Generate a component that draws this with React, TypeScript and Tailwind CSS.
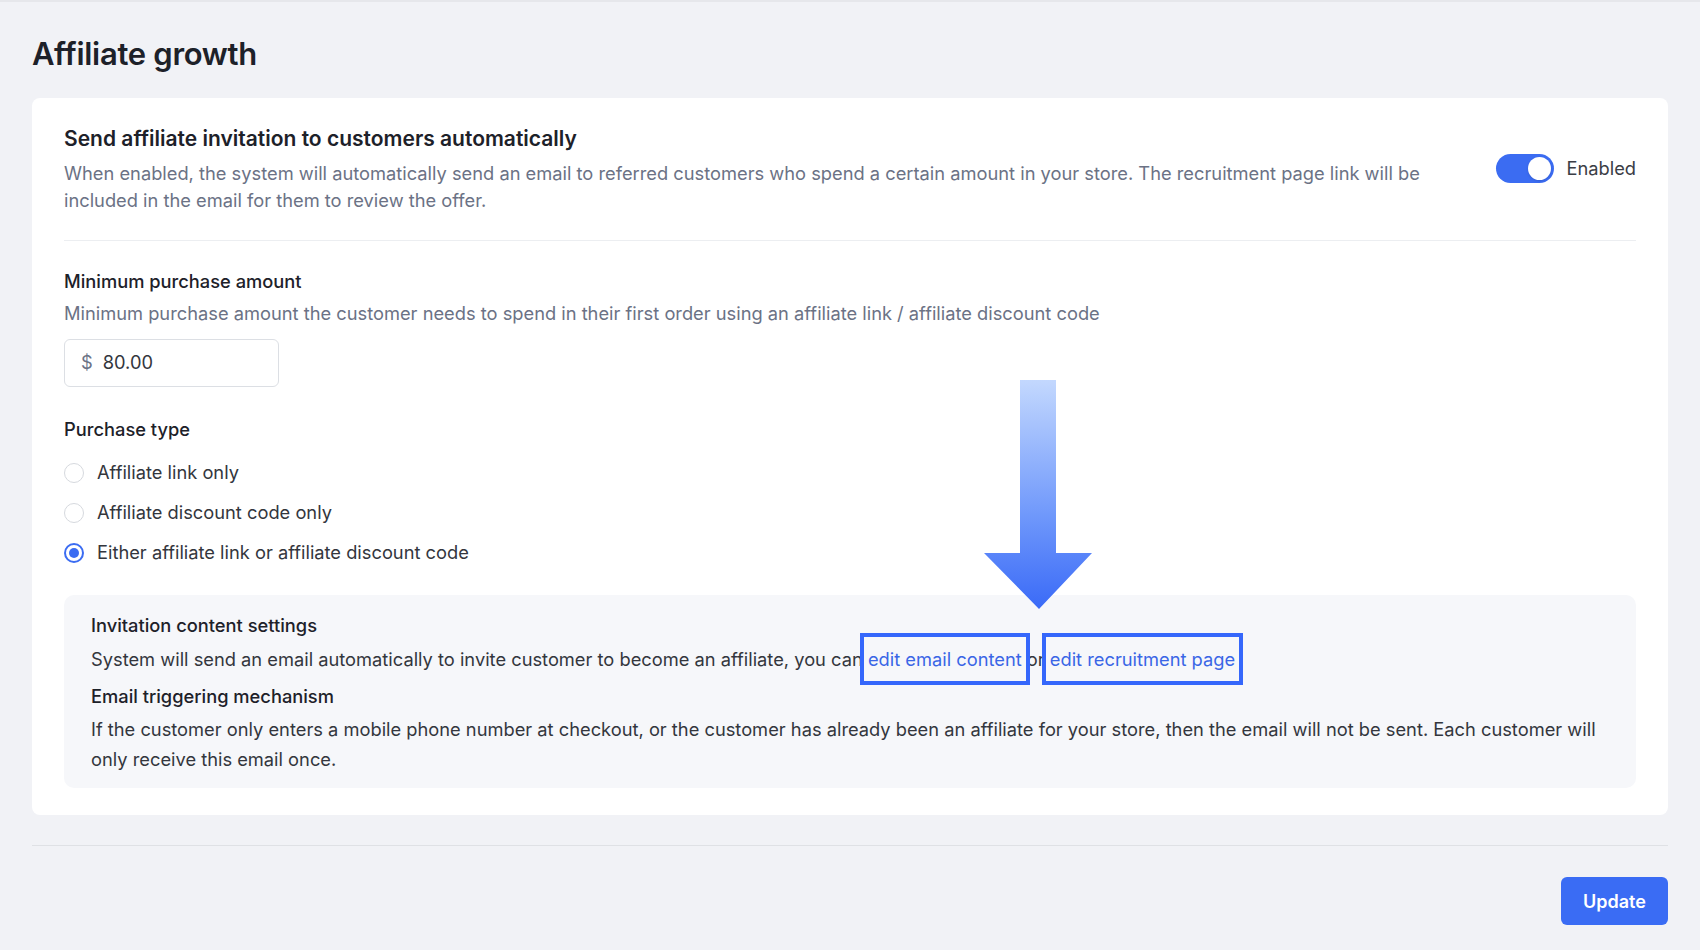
import { useState } from "react";

const purchaseTypes = [
    "Affiliate link only",
    "Affiliate discount code only",
    "Either affiliate link or affiliate discount code",
];

function DownArrow() {
    return (
        <svg width="110" height="230" viewBox="0 0 110 230">
            <defs>
                <linearGradient id="arrowFill" x1="0" y1="0" x2="0" y2="1">
                    <stop offset="0%" stopColor="#c3d8fe" />
                    <stop offset="60%" stopColor="#6e97fb" />
                    <stop offset="100%" stopColor="#3a6af7" />
                </linearGradient>
            </defs>
            <path
                d="M37 0 H73 V173 H109 L56 229 L1 173 H37 Z"
                fill="url(#arrowFill)"
            />
        </svg>
    );
}

function Toggle({ on, onClick }: { on: boolean; onClick: () => void }) {
    return (
        <button
            type="button"
            onClick={onClick}
            className={
                "relative h-[29px] w-[58px] rounded-full transition-colors " +
                (on ? "bg-[#3b6cf2]" : "bg-[#d1d5db]")
            }
        >
            <span
                className={
                    "absolute top-[3px] h-[23px] w-[23px] rounded-full bg-white shadow-sm transition-all " +
                    (on ? "left-[32px]" : "left-[3px]")
                }
            />
        </button>
    );
}

function BoxedLink({ children }: { children: string }) {
    return (
        <span className="relative text-[#3a66e6]">
            {children}
            <span className="pointer-events-none absolute -inset-x-[8px] -inset-y-[15px] border-[4px] border-[#3567fb]" />
        </span>
    );
}

export default function App() {
    const [enabled, setEnabled] = useState(true);
    const [purchaseType, setPurchaseType] = useState(2);
    const [amount, setAmount] = useState("80.00");

    return (
        <div
            className="min-h-[950px] border-t-2 border-[#e6e7eb] bg-[#f1f2f6] px-8 pt-[34px] pb-6 text-[18.3px] text-[#33363d]"
            style={{ fontFamily: "Inter, 'Noto Sans', sans-serif" }}
        >
            <h1 className="text-[31px] leading-[36px] font-semibold tracking-[-0.3px] text-[#1d2129]">
                Affiliate growth
            </h1>

            <div className="relative mt-[26px] rounded-[8px] bg-white px-8 pt-[27px] pb-[27px]">
                {/* auto invitation */}
                <div className="flex items-start justify-between gap-10">
                    <div className="max-w-[1390px] flex-1">
                        <h2 className="text-[21px] leading-[28px] font-semibold text-[#1d2129]">
                            Send affiliate invitation to customers automatically
                        </h2>
                        <p className="mt-[7px] leading-[27px] text-[#6b7285]">
                            When enabled, the system will automatically send an email to
                            referred customers who spend a certain amount in your store. The
                            recruitment page link will be included in the email for them to
                            review the offer.
                        </p>
                    </div>
                    <div className="mt-[29px] flex items-center gap-3">
                        <Toggle on={enabled} onClick={() => setEnabled(!enabled)} />
                        <span className="text-[#3a3d45]">
                            {enabled ? "Enabled" : "Disabled"}
                        </span>
                    </div>
                </div>

                <div className="mt-[26px] border-t border-[#eceef1]" />

                {/* minimum amount */}
                <h3 className="mt-[27px] leading-[26px] font-medium text-[#1d2129]">
                    Minimum purchase amount
                </h3>
                <p className="mt-[6px] leading-[27px] text-[#6b7285]">
                    Minimum purchase amount the customer needs to spend in their first
                    order using an affiliate link / affiliate discount code
                </p>
                <div className="mt-[12px] flex h-[48px] w-[215px] items-center rounded-[6px] border border-[#dcdfe4] px-4">
                    <span className="text-[#6b7285]">$</span>
                    <input
                        className="ml-[10px] w-full bg-transparent text-[#33363d] outline-none"
                        value={amount}
                        onChange={(e) => setAmount(e.target.value)}
                    />
                </div>

                {/* purchase type */}
                <h3 className="mt-[29px] leading-[26px] font-medium text-[#1d2129]">
                    Purchase type
                </h3>
                <div className="mt-[17px] flex flex-col gap-[12px]">
                    {purchaseTypes.map((label, i) => (
                        <label
                            key={label}
                            className="flex h-[28px] cursor-pointer items-center gap-[13px]"
                            onClick={() => setPurchaseType(i)}
                        >
                            {purchaseType === i ? (
                                <span className="flex h-[20px] w-[20px] items-center justify-center rounded-full border-2 border-[#3b6cf2]">
                                    <span className="h-[10px] w-[10px] rounded-full bg-[#3b6cf2]" />
                                </span>
                            ) : (
                                <span className="h-[20px] w-[20px] rounded-full border border-[#d6d9de] bg-white" />
                            )}
                            <span>{label}</span>
                        </label>
                    ))}
                </div>

                {/* invitation content */}
                <div className="mt-[28px] rounded-[10px] bg-[#f6f7fa] px-[27px] pt-[15px] pb-[14px] leading-[30px]">
                    <h4 className="font-medium text-[#1d2129]">Invitation content settings</h4>
                    <p className="mt-[4px]">
                        System will send an email automatically to invite customer to become
                        an affiliate, you can <BoxedLink>edit email content</BoxedLink> or{" "}
                        <BoxedLink>edit recruitment page</BoxedLink>
                    </p>
                    <h4 className="mt-[7px] font-medium text-[#1d2129]">
                        Email triggering mechanism
                    </h4>
                    <p className="mt-[3px]">
                        If the customer only enters a mobile phone number at checkout, or the
                        customer has already been an affiliate for your store, then the email
                        will not be sent. Each customer will only receive this email once.
                    </p>
                </div>

                {/* annotation arrow */}
                <div className="pointer-events-none absolute top-[282px] left-[951px]">
                    <DownArrow />
                </div>
            </div>

            <div className="mt-[30px] border-t border-[#dfe1e5]" />

            <div className="mt-[31px] flex justify-end">
                <button
                    type="button"
                    className="h-[48px] w-[107px] rounded-[6px] bg-[#3a6cf4] text-[18px] font-semibold text-white"
                >
                    Update
                </button>
            </div>
        </div>
    );
}
